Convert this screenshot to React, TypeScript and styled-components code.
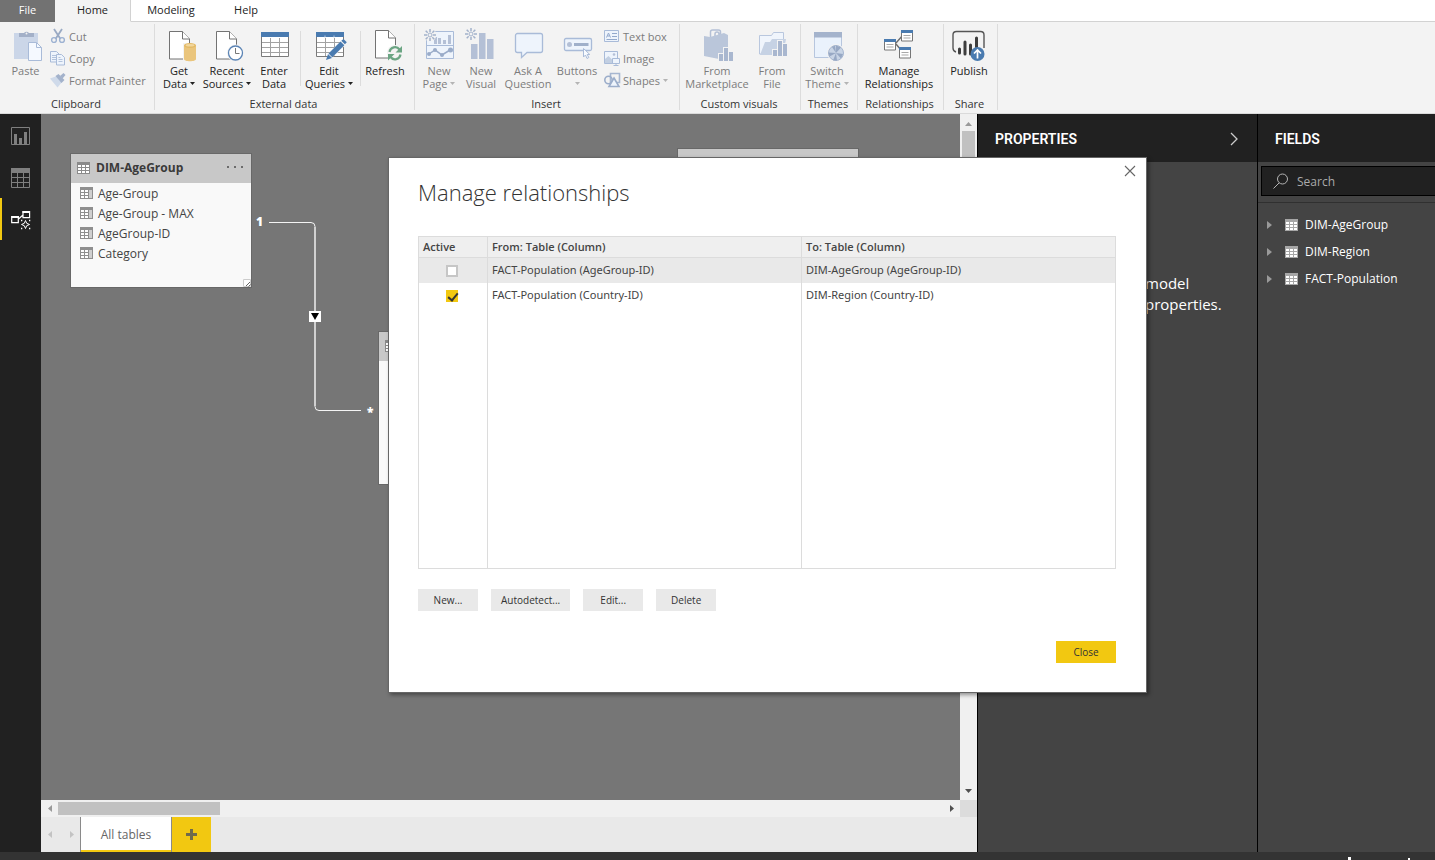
import React from "react";
import styled, { createGlobalStyle, css } from "styled-components";

const GlobalStyle = createGlobalStyle`
  * { box-sizing: border-box; }
  body {
    margin: 0;
    background: #333;
    font-family: "Open Sans", "Noto Sans", sans-serif;
    font-size: 11px;
    color: #333;
  }
  button, input { font: inherit; color: inherit; }
  button { border: 0; padding: 0; background: none; }
  svg { display: block; overflow: visible; flex: none; }
`;

/* ---------- Shell ---------- */

const Page = styled.div`
  display: flex;
  flex-direction: column;
  height: 100vh;
  min-height: 480px;
  overflow: hidden;
`;

const Workspace = styled.div`
  position: relative;
  display: flex;
  flex: 1;
  min-height: 0;
`;

const StatusBar = styled.footer`
  display: flex;
  justify-content: flex-end;
  align-items: flex-end;
  gap: 57px;
  height: 8px;
  padding-right: 25px;
  background: #333;
  overflow: hidden;
`;

const StatusMark = styled.span<{ $size: number }>`
  width: ${(p) => p.$size}px;
  height: ${(p) => p.$size}px;
  max-height: 3px;
  background: #fff;
`;

/* ---------- Ribbon ---------- */

const TabStrip = styled.nav`
  display: flex;
  height: 22px;
  background: #fff;
`;

const TabFill = styled.div`
  flex: 1;
  border-bottom: 1px solid #d2d2d2;
`;

const Tab = styled.button<{ $width: number; $kind?: "file" | "active" }>`
  width: ${(p) => p.$width}px;
  padding-bottom: 1px;
  line-height: 20px;
  color: #222;
  border-bottom: 1px solid #d2d2d2;
  ${(p) => p.$kind === "file" && css`background: #727272; color: #fff; border-color: #727272;`}
  ${(p) => p.$kind === "active" && css`background: #f3f3f3; border-bottom-color: #f3f3f3; border-right: 1px solid #d2d2d2;`}
`;

const RibbonBar = styled.header`
  display: flex;
  height: 92px;
  background: #f3f3f3;
  border-bottom: 1px solid #dadada;
  overflow: hidden;
`;

const Group = styled.section<{ $width: number }>`
  display: flex;
  flex-direction: column;
  flex: none;
  width: ${(p) => p.$width}px;
`;

const GroupBody = styled.div<{ $inset?: number }>`
  display: flex;
  height: 73px;
  padding-left: ${(p) => p.$inset ?? 0}px;
`;

const GroupLabel = styled.div`
  padding-right: 2px;
  line-height: 18px;
  text-align: center;
  color: #333;
`;

const GroupRule = styled.div`
  width: 1px;
  margin: 2px 0 3px;
  background: #dcdcdc;
`;

const InnerRule = styled.div<{ $before: number }>`
  width: 1px;
  margin: 9px 0 9px ${(p) => p.$before}px;
  background: #dcdcdc;
`;

const BigButton = styled.button<{ $width: number }>`
  display: flex;
  flex-direction: column;
  align-items: center;
  width: ${(p) => p.$width}px;
  padding-top: 8px;
  line-height: 13px;
  white-space: nowrap;
  color: #222;
  &:disabled { color: #7c7c7c; }
  > svg { margin-bottom: 2px; }
  &:disabled span > svg { color: #b4b4b4; }
`;

const Line = styled.span`
  display: flex;
  align-items: center;
  gap: 3px;
  height: 13px;
`;

const SmallList = styled.div<{ $before?: number }>`
  display: flex;
  flex-direction: column;
  padding-top: 3px;
  margin-left: ${(p) => p.$before ?? 0}px;
`;

const SmallButton = styled.button`
  display: flex;
  align-items: center;
  gap: 3px;
  height: 22px;
  white-space: nowrap;
  color: #7c7c7c;
  > svg:last-child { color: #b4b4b4; }
`;

const Caret = () => (
  <svg width="5" height="3" viewBox="0 0 5 3"><path d="M0 0h5L2.500 3z" fill="currentColor" /></svg>
);

const STEEL = "#b4c0d6";
const MIST = "#a9bbd8";
const PALE = "#eef4fc";
const BLUE = "#4a7bb0";

const Big = ({ children }: { children: React.ReactNode }) => (
  <svg width="32" height="32" viewBox="0 0 32 32" fill="none" aria-hidden="true">{children}</svg>
);
const Small = ({ children }: { children: React.ReactNode }) => (
  <svg width="16" height="16" viewBox="0 0 16 16" fill="none" aria-hidden="true">{children}</svg>
);

const Doc = ({ x = 6.5 }: { x?: number }) => (
  <g stroke="#737373" fill="#fff">
    <path d={`M${x} 1.500h13l7 7.500v20h-20z`} />
    <path d={`M${x + 13} 1.500v7.500h7`} />
  </g>
);

const PasteIcon = () => (
  <Big>
    <path d="M4 3h24v26H4z" fill="#cbd6e8" />
    <path d="M9 7V3h5a3 3 0 0 1 5 0h5v4z" fill="#a3b0c8" />
    <circle cx="16.500" cy="3.500" r="1" fill="#f3f3f3" />
    <path d="M18.500 12.500h8l5 5v13h-13z" fill="#f5f9ff" stroke={MIST} />
    <path d="M26.500 12.500v5h5" stroke={MIST} />
  </Big>
);
const GetDataIcon = () => (
  <Big>
    <Doc />
    <path d="M20 13h14v19H20z" fill="#f3f3f3" />
    <path d="M21 15.500v13.500c0 3 12 3 12 0V15.500z" fill="#eac57c" />
    <ellipse cx="27" cy="15.500" rx="6" ry="2.500" fill="#e3b964" />
    <ellipse cx="27" cy="15.300" rx="4.500" ry="1.300" fill="#f2d79e" />
  </Big>
);
const RecentIcon = () => (
  <Big>
    <Doc x={5.500} />
    <circle cx="24.500" cy="23" r="8.500" fill="#f3f3f3" />
    <circle cx="24.500" cy="23" r="7" fill="#fff" stroke="#5b84b5" strokeWidth="1.300" />
    <path d="M24.500 18v5.500h4" stroke="#777" />
  </Big>
);
const GridBase = () => (
  <>
    <path d="M3.500 2.500h27v24h-27z" fill="#fff" stroke="#7a7a7a" />
    <path d="M12.500 8v18M21.500 8v18M4 12.500h26M4 17.500h26M4 22.500h26" stroke="#a2a2a2" />
    <path d="M3 2h28v5H3z" fill={BLUE} />
  </>
);
const EnterIcon = () => <Big><GridBase /></Big>;
const EditIcon = () => (
  <Big>
    <GridBase />
    <path d="M12 5.500v2M21 5.500v2" stroke="#b9cbe0" />
    <path d="M14 29l3-7L29.500 10l4 4L21 26z" fill="#f3f3f3" />
    <path d="M13 30l2-6 4 4zM15.500 23.500l12-12 3.800 3.800-12 12zM28.300 10.700l2.200-1.700 3.300 3.300-1.900 2z" fill={BLUE} />
  </Big>
);
const RefreshIcon = () => (
  <Big>
    <g transform="translate(0 -1)"><Doc /></g>
    <circle cx="26" cy="23" r="8" fill="#f3f3f3" />
    <g stroke="#6ba583" strokeWidth="2.200">
      <path d="M20.500 22a5.600 5.600 0 0 1 10-2.500M31.500 24.500a5.600 5.600 0 0 1-10 2.500" />
    </g>
    <path d="M33 16v6.500h-6.500zM19 30.500V24h6.500z" fill="#6ba583" />
  </Big>
);
const Burst = ({ x, y }: { x: number; y: number }) => (
  <g transform={`translate(${x} ${y})`} stroke="#a3b2cb" strokeWidth="1.500">
    <circle r="6.500" fill="#f3f3f3" stroke="none" />
    <path d="M0-6v3M0 3v3M-6 0h3M3 0h3M-4.300-4.300l2 2M2.300 2.300l2 2M-4.300 4.300l2-2M2.300-2.300l2-2" />
    <circle r="2" strokeWidth="1" />
  </g>
);
const NewPageIcon = () => (
  <Big>
    <path d="M3.500 1.500h27v27h-27zM3.500 15.500h27" stroke={MIST} fill={PALE} />
    <path d="M11 7h3v7h-3zM15 8h3v6h-3zM20 10h3v4h-3zM25 5h3v9h-3z" fill={STEEL} />
    <path d="M6 24l6-4 7 5 8-5" stroke="#9aacc9" strokeWidth="1.500" />
    <g fill="#9aacc9"><circle cx="6" cy="24" r="2" /><circle cx="12" cy="20" r="2" /><circle cx="19" cy="25" r="2" /><circle cx="27.500" cy="20" r="2.500" /></g>
    <Burst x={7} y={5} />
  </Big>
);
const NewVisualIcon = () => (
  <Big>
    <path d="M6 14h6.500v15H6zM14 3h6.500v26H14zM22 9h6.500v20H22z" fill={STEEL} />
    <Burst x={6} y={4} />
  </Big>
);
const AskIcon = () => (
  <Big>
    <path d="M5.500 3.500h23a2 2 0 0 1 2 2v15a2 2 0 0 1-2 2H15l-5.500 5v-5h-4a2 2 0 0 1-2-2v-15a2 2 0 0 1 2-2z" fill={PALE} stroke={MIST} strokeWidth="1.300" />
  </Big>
);
const ButtonsIcon = () => (
  <Big>
    <rect x="3.500" y="8.500" width="27" height="12" rx="1.500" fill={PALE} stroke={MIST} strokeWidth="1.300" />
    <circle cx="8.500" cy="14.500" r="2.500" fill={STEEL} />
    <path d="M13 13h14.500v3H13z" fill="#a0b0ca" />
    <path d="M22.500 18.500v8.500l2-2 1.500 3.500 1.800-1-1.600-3h2.600z" fill="#f8fbff" stroke={MIST} />
  </Big>
);
const MarketIcon = () => (
  <Big>
    <path d="M9.500 8V2q0-2 2-2h6q2 0 2 2v4M14 7V4q0-2 2-2t2 2v3" stroke={STEEL} strokeWidth="1.500" />
    <path d="M3 6l6 1 14-4 4 2v23l-4 2-20-4z" fill="#bac6da" />
    <path d="M17 24v-1h5v-6h6v4h5v11H17z" fill="#f3f3f3" />
    <path d="M18 24h4v7h-4zM23 18h4v13h-4zM28 22h4v9h-4z" fill="#a9b7cf" />
  </Big>
);
const FileIcon = () => (
  <Big>
    <path d="M3.500 24V5.500h12l2-3h10V24z" stroke="#b9c7de" fill="#f0f5fc" />
    <path d="M4 25l5-13h5l2-3h14l-3 16z" fill="#c6d2e4" />
    <path d="M16 19h5v-9h6v3h5v13H16z" fill="#f3f3f3" />
    <path d="M17 20h4v6h-4zM22 11h4v15h-4zM27 14h4v12h-4z" fill="#a9b7cf" />
  </Big>
);
const ThemeIcon = () => (
  <Big>
    <path d="M3.500 2.500h27v25h-27z" fill="#eaf2fc" stroke="#b7c6de" />
    <path d="M3 2h28v5.500H3z" fill="#a4b3cc" />
    <circle cx="25" cy="23" r="9" fill="#f3f3f3" />
    <circle cx="25" cy="23" r="7.500" fill="#c8d4e5" stroke="#a6b6d0" />
    <path d="M25 23v-7.500l5 2zM25 23l7 1-2 4.500zM25 23l1 7.500h-4zM25 23l-6.500 3.500-1-4zM25 23l-4-6 3-1.500z" fill="#97a8c4" />
  </Big>
);
const RelBox = ({ x, y }: { x: number; y: number }) => (
  <g transform={`translate(${x} ${y})`}>
    <path d="M.500.500h11v10.500H.500z" fill="#fff" stroke="#767676" />
    <path d="M0 0h12v3H0z" fill={BLUE} />
    <path d="M2.500 5.500h7M2.500 8h7" stroke="#a9a9a9" />
  </g>
);
const ManageIcon = () => (
  <Big>
    <path d="M13 13l7-8M13 14l5 6" stroke="#6d6d6d" strokeWidth="1.400" />
    <RelBox x={1} y={9} /><RelBox x={18} y={0} /><RelBox x={16} y={17} />
  </Big>
);
const PublishIcon = () => (
  <Big>
    <path d="M3 22q-3-1-3-4V5q0-3.500 3.500-3.500h24Q31 1.500 31 5v13" stroke="#555" strokeWidth="1.400" />
    <path d="M6.500 19v4M12 12v12M17.500 15v9M23.500 8v9" stroke="#3d3d3d" strokeWidth="3" strokeLinecap="round" />
    <circle cx="24.500" cy="24" r="7" fill={BLUE} />
    <path d="M24.500 28.500v-8M21 23.500l3.500-3.500 3.500 3.500" stroke="#fff" strokeWidth="1.700" />
  </Big>
);

const CutIcon = () => (
  <Small>
    <path d="M4 1l6.500 10M12 1L5.500 11" stroke="#9aaac4" strokeWidth="1.800" />
    <circle cx="4" cy="12" r="2.400" stroke="#9db2d2" strokeWidth="1.400" />
    <circle cx="12" cy="12" r="2.400" stroke="#9db2d2" strokeWidth="1.400" />
  </Small>
);
const CopyIcon = () => (
  <Small>
    <path d="M.500 1.500h6l2.500 2.500v8H.500z" fill={PALE} stroke={MIST} />
    <path d="M2 5.500h4M2 7.500h4M2 9.500h4" stroke="#b3c3dc" />
    <path d="M6.500 4.500h5l3 3v7.500h-8z" fill={PALE} stroke={MIST} />
    <path d="M8.500 9.500h4M8.500 11.500h4M8.500 7.500h2" stroke="#b3c3dc" />
  </Small>
);
const PainterIcon = () => (
  <Small>
    <path d="M0 6.500l7-2.500 5 6-4.500 5.500z" fill="#cfdaea" />
    <path d="M5.500 4l3-2 6 6-3 3z" fill="#a3b2cb" />
    <path d="M10 4l3.500-3 2 2-3 3.500z" fill="#a3b2cb" />
  </Small>
);
const TextBoxIcon = () => (
  <Small>
    <path d="M.500 2.500h14v11H.500z" fill={PALE} stroke={MIST} />
    <path d="M2.500 9.500L4.500 5l2 4.500M3.500 8h2M8 5.500h5M8 8.500h5M2.500 11.500H13" stroke="#93a9cc" />
  </Small>
);
const ImageIcon = () => (
  <Small>
    <path d="M.500 1.500h13v12H.500z" fill={PALE} stroke={MIST} />
    <path d="M1 13V9l3.500-3 4 4v3z" fill="#c2cfe2" /><circle cx="10" cy="4.500" r="1.300" fill={STEEL} />
    <path d="M8.500 8.500h7v5h-7zM12 14v1.500M9.500 15.500h5" fill={PALE} stroke={MIST} />
  </Small>
);
const ShapesIcon = () => (
  <Small>
    <path d="M6.500 1.500h9v9h-9z" stroke="#a6b6d0" strokeWidth="1.600" />
    <circle cx="4.500" cy="8" r="3.700" stroke="#9badca" strokeWidth="1.600" />
    <path d="M10 6l5 8.500H5z" fill={PALE} stroke="#9badca" strokeWidth="1.600" />
  </Small>
);

/* ---------- View rail ---------- */

const Rail = styled.nav`
  display: flex;
  flex-direction: column;
  flex: none;
  width: 41px;
  background: #212121;
`;

const RailButton = styled.button<{ $on?: boolean }>`
  display: flex;
  align-items: center;
  justify-content: center;
  height: 42px;
  border-left: 2px solid ${(p) => (p.$on ? "#f2c811" : "transparent")};
  padding: 2px 2px 0 0;
  color: ${(p) => (p.$on ? "#fff" : "#7f7f7f")};
`;

const ReportIcon = () => (
  <svg width="20" height="20" viewBox="0 0 20 20" fill="none">
    <path d="M.500 1.500h18v17H.500z" stroke="currentColor" />
    <path d="M3 8h3v10H3zM8 12h3v6H8zM13 6h3v12h-3z" fill="currentColor" />
  </svg>
);
const DataIcon = () => (
  <svg width="20" height="20" viewBox="0 0 20 20" fill="none">
    <path d="M.500.500h18v19H.500zM1 9.500h18M1 14.500h18M6.500 5v14M12.500 5v14" stroke="currentColor" />
    <path d="M0 0h19v5H0z" fill="currentColor" />
  </svg>
);
const ModelIcon = () => (
  <svg width="20" height="20" viewBox="0 0 20 20" fill="none" stroke="currentColor">
    <path d="M.700 6.700h6.600v6H.700zM12 1.700h6.600v6H12zM7.500 9l4.500-4" strokeWidth="1.200" />
    <path d="M.500 7H8M11.500 2H19" strokeWidth="2" />
    <path d="M14.500 10.500l1.200 2.800 2.800 1.200-2.800 1.200-1.200 2.800-1.200-2.800-2.800-1.200 2.800-1.200z" />
    <path d="M10 10.500h1.300M18 10.500h1.300M10 18.500h1.300M18 18.500h1.300" strokeWidth="1.300" />
  </svg>
);

/* ---------- Diagram canvas ---------- */

const Stage = styled.main`
  display: flex;
  flex-direction: column;
  flex: 1;
  min-width: 0;
`;

const StageRow = styled.div`
  display: flex;
  flex: 1;
  min-height: 0;
`;

const Canvas = styled.div`
  position: relative;
  flex: 1;
  min-width: 0;
  overflow: hidden;
  background: #767676;
`;

const Node = styled.article<{ $x: number; $y: number; $h: number }>`
  position: absolute;
  left: ${(p) => p.$x}px;
  top: ${(p) => p.$y}px;
  width: 180px;
  height: ${(p) => p.$h}px;
  background: #f9f9f9;
  box-shadow: 0 0 0 1px #686868;
`;

const NodeHead = styled.h3`
  display: flex;
  align-items: center;
  gap: 6px;
  height: 29px;
  margin: 0;
  padding: 0 8px 2px 6px;
  background: #c8c8c8;
  font-size: 12px;
  font-weight: 700;
  color: #3a3a3a;
`;

const NodeMenu = styled.button`
  margin-left: auto;
  color: #6b6b6b;
`;

const NodeFields = styled.ul`
  margin: 0;
  padding: 0 9px;
  list-style: none;
  font-size: 12px;
  color: #444;
`;

const NodeField = styled.li`
  display: flex;
  align-items: center;
  gap: 5px;
  height: 20px;
`;

const Grip = styled.svg`
  position: absolute;
  right: 0;
  bottom: 0;
`;

const Links = styled.svg`
  position: absolute;
  left: 215px;
  top: 100px;
`;

const EndMark = styled.span<{ $x: number; $y: number }>`
  position: absolute;
  left: ${(p) => p.$x}px;
  top: ${(p) => p.$y}px;
  font-size: 12px;
  line-height: 16px;
  font-weight: 800;
  color: #fff;
`;

const TableGlyph = ({ color = "#8a8a8a" }: { color?: string }) => (
  <svg width="13" height="12" viewBox="0 0 13 12">
    <path d="M0 0h13v12H0z" fill={color} />
    <path d="M1 3h3v2H1zM5 3h3v2H5zM9 3h3v2H9zM1 6h3v2H1zM5 6h3v2H5zM9 6h3v2H9zM1 9h3v2H1zM5 9h3v2H5zM9 9h3v2H9z" fill="#fff" />
  </svg>
);
const ColumnGlyph = () => (
  <svg width="13" height="12" viewBox="0 0 13 12">
    <path d="M0 0h13v12H0z" fill="#8f8f8f" />
    <path d="M1 3h3v2H1zM5 3h3v2H5zM1 6h3v2H1zM5 6h3v2H5zM1 9h3v2H1zM5 9h3v2H5z" fill="#fff" />
    <path d="M9 3h3v8H9z" fill="#cfcfcf" />
  </svg>
);

/* ---------- Scroll bars and page tabs ---------- */

const VTrack = styled.div`
  display: flex;
  flex-direction: column;
  align-items: center;
  justify-content: space-between;
  width: 17px;
  padding: 7px 0;
  background: #f0f0f0;
`;

const VThumb = styled.div`
  width: 13px;
  height: 300px;
  margin: 5px 0 auto;
  background: #c1c1c1;
`;

const HTrack = styled.div`
  display: flex;
  align-items: center;
  flex: 1;
  height: 17px;
  padding: 0 6px;
  background: #f0f0f0;
`;

const HThumb = styled.div`
  width: 162px;
  height: 13px;
  margin: 0 auto 0 6px;
  background: #c1c1c1;
`;

const HRow = styled.div`
  display: flex;
  background: #dcdcdc;
  padding-right: 17px;
`;

const Arrow = ({ dir, color }: { dir: "up" | "down" | "left" | "right"; color: string }) => {
  const shape = {
    up: "M0 5h7L3.500 1z",
    down: "M0 1h7L3.500 5z",
    left: "M5 0v7L1 3.500z",
    right: "M1 0v7l4-3.500z",
  }[dir];
  const tall = dir === "left" || dir === "right";
  return (
    <svg width={tall ? 5 : 7} height={tall ? 7 : 5} aria-hidden="true"><path d={shape} fill={color} /></svg>
  );
};

const Sheets = styled.div`
  display: flex;
  height: 35px;
  background: #e9e9e9;
`;

const SheetNav = styled.div`
  display: flex;
  align-items: center;
  justify-content: space-between;
  width: 39px;
  padding: 0 6px;
`;

const Sheet = styled.button`
  width: 92px;
  background: #fff;
  border: solid #8a8a8a;
  border-width: 0 1px;
  box-shadow: inset 0 -2px 0 #f2c811;
  font-size: 12px;
  color: #666;
`;

const AddSheet = styled.button`
  display: flex;
  align-items: center;
  justify-content: center;
  width: 39px;
  background: #f2c811;
`;

/* ---------- Side panes ---------- */

const Pane = styled.aside<{ $width: number }>`
  flex: none;
  width: ${(p) => p.$width}px;
  border-left: 1px solid #000;
  background: #444;
  color: #fff;
  overflow: hidden;
`;

const PaneHead = styled.div`
  display: flex;
  align-items: center;
  justify-content: space-between;
  height: 48px;
  padding: 2px 19px 0 17px;
  background: #212121;
`;

const PaneTitle = styled.h2`
  margin: 0;
  font-family: Roboto, sans-serif;
  font-size: 14px;
  font-weight: 600;
`;

const PaneHint = styled.p`
  margin: 111px 0 0 167px;
  font-size: 15px;
  line-height: 21px;
`;

const SearchArea = styled.div`
  padding: 4px 0 6px 3px;
  border-bottom: 1px solid #303030;
`;

const SearchBox = styled.label`
  display: flex;
  align-items: center;
  gap: 8px;
  height: 30px;
  padding-left: 11px;
  background: #212121;
  border: 1px solid #000;
  border-right: 0;
`;

const SearchInput = styled.input`
  min-width: 0;
  flex: 1;
  padding: 0;
  border: 0;
  outline: 0;
  background: transparent;
  font-size: 12px;
  &::placeholder { color: #aaa; opacity: 1; }
`;

const FieldTree = styled.ul`
  margin: 0;
  padding: 8px 0 0 9px;
  list-style: none;
  font-size: 12px;
`;

const FieldItem = styled.li`
  display: flex;
  align-items: center;
  gap: 7px;
  height: 27px;
  > svg:first-child { margin-right: 6px; }
`;

/* ---------- Dialog ---------- */

const Dialog = styled.section`
  position: absolute;
  left: 388px;
  right: 288px;
  top: 43px;
  display: flex;
  flex-direction: column;
  padding: 19px 30px 29px 29px;
  background: #fff;
  border: 1px solid #666;
  box-shadow: 2px 2px 4px rgba(0, 0, 0, 0.4);
`;

const DialogClose = styled.button`
  position: absolute;
  top: 7px;
  right: 10px;
`;

const DialogTitle = styled.h1`
  margin: 0 0 29px;
  font-size: 22px;
  line-height: 30px;
  font-weight: 300;
  color: #333;
`;

const RelTable = styled.table`
  width: 100%;
  height: 333px;
  table-layout: fixed;
  border-collapse: collapse;
  color: #444;
  th, td {
    padding: 0 4px 2px;
    border: solid #dcdcdc;
    border-width: 0 1px;
    text-align: left;
  }
  td { font-family: "Noto Sans", "Open Sans", sans-serif; }
  th {
    height: 21px;
    border-width: 1px;
    background: #efefef;
    font-weight: 600;
  }
  tr:last-child td { border-bottom-width: 1px; }
`;

const RelRow = styled.tr<{ $shaded?: boolean }>`
  height: 25px;
  background: ${(p) => (p.$shaded ? "#e9e9e9" : "transparent")};
`;

const ActiveCell = styled.td`
  && { padding: 2px 2px 0 0; }
`;

const ActiveBox = styled.input`
  appearance: none;
  display: block;
  width: 12px;
  height: 12px;
  margin: 0 auto;
  background: #fff;
  border: 2px solid #c6c6c6;
  &:checked { background: #f2c811; border-color: #f2c811; }
  &:checked::after {
    content: "";
    display: block;
    width: 4px;
    height: 8px;
    margin: -1px 0 0 2px;
    border: solid #333;
    border-width: 0 2px 2px 0;
    transform: rotate(40deg);
  }
`;

const Actions = styled.div`
  display: flex;
  gap: 13px;
  margin: 20px 0 30px;
`;

const ActionButton = styled.button<{ $primary?: boolean }>`
  min-width: 60px;
  height: 22px;
  padding: 0 10px;
  background: ${(p) => (p.$primary ? "#f2c811" : "#e9e9e9")};
  font-size: 10px;
  color: #333;
  align-self: ${(p) => (p.$primary ? "flex-end" : "auto")};
`;

/* ---------- Data ---------- */

const ageFields = ["Age-Group", "Age-Group - MAX", "AgeGroup-ID", "Category"];
const tables = ["DIM-AgeGroup", "DIM-Region", "FACT-Population"];
const relations = [
  { from: "FACT-Population (AgeGroup-ID)", to: "DIM-AgeGroup (AgeGroup-ID)", active: false },
  { from: "FACT-Population (Country-ID)", to: "DIM-Region (Country-ID)", active: true },
];

type BigProps = { icon: React.ReactNode; width: number; top: string; bottom?: string; caret?: boolean; off?: boolean };
const BigCommand = ({ icon, width, top, bottom, caret, off }: BigProps) => (
  <BigButton $width={width} disabled={off}>
    {icon}
    <Line>{top}</Line>
    <Line>{bottom}{caret && <Caret />}</Line>
  </BigButton>
);

const Ribbon = () => (
  <RibbonBar>
    <Group $width={154}>
      <GroupBody $inset={1}>
        <BigCommand icon={<PasteIcon />} width={49} top="Paste" off />
        <SmallList>
          <SmallButton disabled><CutIcon />Cut</SmallButton>
          <SmallButton disabled><CopyIcon />Copy</SmallButton>
          <SmallButton disabled><PainterIcon />Format Painter</SmallButton>
        </SmallList>
      </GroupBody>
      <GroupLabel>Clipboard</GroupLabel>
    </Group>
    <GroupRule />
    <Group $width={259}>
      <GroupBody>
        <BigCommand icon={<GetDataIcon />} width={48} top="Get" bottom="Data" caret />
        <BigCommand icon={<RecentIcon />} width={48} top="Recent" bottom="Sources" caret />
        <BigCommand icon={<EnterIcon />} width={46} top="Enter" bottom="Data" />
        <InnerRule $before={3} />
        <BigCommand icon={<EditIcon />} width={56} top="Edit" bottom="Queries" caret />
        <InnerRule $before={3} />
        <BigCommand icon={<RefreshIcon />} width={48} top="Refresh" />
      </GroupBody>
      <GroupLabel>External data</GroupLabel>
    </Group>
    <GroupRule />
    <Group $width={264}>
      <GroupBody $inset={3}>
        <BigCommand icon={<NewPageIcon />} width={42} top="New" bottom="Page" caret off />
        <BigCommand icon={<NewVisualIcon />} width={42} top="New" bottom="Visual" off />
        <BigCommand icon={<AskIcon />} width={52} top="Ask A" bottom="Question" off />
        <BigCommand icon={<ButtonsIcon />} width={46} top="Buttons" caret off />
        <SmallList $before={4}>
          <SmallButton disabled><TextBoxIcon />Text box</SmallButton>
          <SmallButton disabled><ImageIcon />Image</SmallButton>
          <SmallButton disabled><ShapesIcon />Shapes <Caret /></SmallButton>
        </SmallList>
      </GroupBody>
      <GroupLabel>Insert</GroupLabel>
    </Group>
    <GroupRule />
    <Group $width={120}>
      <GroupBody $inset={3}>
        <BigCommand icon={<MarketIcon />} width={68} top="From" bottom="Marketplace" off />
        <BigCommand icon={<FileIcon />} width={42} top="From" bottom="File" off />
      </GroupBody>
      <GroupLabel>Custom visuals</GroupLabel>
    </Group>
    <GroupRule />
    <Group $width={56}>
      <GroupBody>
        <BigCommand icon={<ThemeIcon />} width={52} top="Switch" bottom="Theme" caret off />
      </GroupBody>
      <GroupLabel>Themes</GroupLabel>
    </Group>
    <GroupRule />
    <Group $width={85}>
      <GroupBody>
        <BigCommand icon={<ManageIcon />} width={82} top="Manage" bottom="Relationships" />
      </GroupBody>
      <GroupLabel>Relationships</GroupLabel>
    </Group>
    <GroupRule />
    <Group $width={53}>
      <GroupBody>
        <BigCommand icon={<PublishIcon />} width={50} top="Publish" />
      </GroupBody>
      <GroupLabel>Share</GroupLabel>
    </Group>
    <GroupRule />
  </RibbonBar>
);

const Diagram = () => (
  <Canvas>
    <Node $x={30} $y={40} $h={133}>
      <NodeHead><TableGlyph />DIM-AgeGroup
        <NodeMenu aria-label="More options">
          <svg width="16" height="3" viewBox="0 0 16 3" fill="currentColor"><path d="M0 0h2v2H0zM7 0h2v2H7zM14 0h2v2h-2z" /></svg>
        </NodeMenu>
      </NodeHead>
      <NodeFields>
        {ageFields.map((f) => <NodeField key={f}><ColumnGlyph />{f}</NodeField>)}
      </NodeFields>
      <Grip width="8" height="8" viewBox="0 0 8 8"><path d="M.500.500h7v7h-7z" fill="#fff" stroke="#ccc" /><path d="M3 7l4-4M5.500 7.500l2-2" stroke="#666" /></Grip>
    </Node>
    <Node $x={338} $y={218} $h={152}><NodeHead><TableGlyph /></NodeHead></Node>
    <Node $x={637} $y={35} $h={150}><NodeHead><TableGlyph /></NodeHead></Node>
    <Links width="120" height="210" viewBox="0 0 120 210" fill="none">
      <path d="M13 8.500h42q4 0 4 4v180q0 4 4 4h42" stroke="#f4f4f4" strokeWidth="1" />
      <path d="M59 13v179" stroke="#d0d0d0" strokeWidth="2" />
      <path d="M53 97h12v11H53z" fill="#fff" />
      <path d="M55 99h8l-4 7z" fill="#000" />
    </Links>
    <EndMark $x={215} $y={100}>1</EndMark>
    <EndMark $x={326} $y={290}>*</EndMark>
  </Canvas>
);

export default function App() {
  return (
    <Page>
      <GlobalStyle />
      <TabStrip>
        <Tab $width={55} $kind="file">File</Tab>
        <Tab $width={76} $kind="active">Home</Tab>
        <Tab $width={80}>Modeling</Tab>
        <Tab $width={70}>Help</Tab>
        <TabFill />
      </TabStrip>
      <Ribbon />
      <Workspace>
        <Rail>
          <RailButton aria-label="Report"><ReportIcon /></RailButton>
          <RailButton aria-label="Data"><DataIcon /></RailButton>
          <RailButton aria-label="Model" $on><ModelIcon /></RailButton>
        </Rail>
        <Stage>
          <StageRow>
            <Diagram />
            <VTrack>
              <Arrow dir="up" color="#999" />
              <VThumb />
              <Arrow dir="down" color="#505050" />
            </VTrack>
          </StageRow>
          <HRow>
            <HTrack>
              <Arrow dir="left" color="#999" />
              <HThumb />
              <Arrow dir="right" color="#505050" />
            </HTrack>
          </HRow>
          <Sheets>
            <SheetNav><Arrow dir="left" color="#c3c3c3" /><Arrow dir="right" color="#c3c3c3" /></SheetNav>
            <Sheet>All tables</Sheet>
            <AddSheet aria-label="Add page">
              <svg width="11" height="11" viewBox="0 0 11 11"><path d="M5.500 0v11M0 5.500h11" stroke="#6f6a4c" strokeWidth="3" /></svg>
            </AddSheet>
          </Sheets>
        </Stage>
        <Pane $width={280}>
          <PaneHead>
            <PaneTitle>PROPERTIES</PaneTitle>
            <button aria-label="Collapse">
              <svg width="8" height="12" viewBox="0 0 8 12" fill="none"><path d="M1 0l6 6-6 6" stroke="#ccc" strokeWidth="1.300" /></svg>
            </button>
          </PaneHead>
          <PaneHint>model<br />properties.</PaneHint>
        </Pane>
        <Pane $width={178}>
          <PaneHead><PaneTitle>FIELDS</PaneTitle></PaneHead>
          <SearchArea>
            <SearchBox>
              <svg width="16" height="16" viewBox="0 0 16 16" fill="none" stroke="#b5b5b5"><circle cx="9.500" cy="6" r="5" /><path d="M6 10l-5.500 5.500" /></svg>
              <SearchInput placeholder="Search" aria-label="Search" />
            </SearchBox>
          </SearchArea>
          <FieldTree>
            {tables.map((t) => (
              <FieldItem key={t}>
                <svg width="5" height="8" viewBox="0 0 5 8"><path d="M0 0v8l5-4z" fill="#9a9a9a" /></svg>
                <TableGlyph color="#a6a6a6" />{t}
              </FieldItem>
            ))}
          </FieldTree>
        </Pane>
        <Dialog role="dialog" aria-labelledby="dialog-title">
          <DialogClose aria-label="Close dialog">
            <svg width="12" height="12" viewBox="0 0 12 12"><path d="M1 1l10 10M11 1L1 11" stroke="#666" strokeWidth="1.100" /></svg>
          </DialogClose>
          <DialogTitle id="dialog-title">Manage relationships</DialogTitle>
          <RelTable>
            <colgroup><col width="69" /><col /><col /></colgroup>
            <thead>
              <tr><th>Active</th><th>From: Table (Column)</th><th>To: Table (Column)</th></tr>
            </thead>
            <tbody>
              {relations.map((r) => (
                <RelRow key={r.from} $shaded={!r.active}>
                  <ActiveCell><ActiveBox type="checkbox" defaultChecked={r.active} aria-label={`Active: ${r.from}`} /></ActiveCell>
                  <td>{r.from}</td>
                  <td>{r.to}</td>
                </RelRow>
              ))}
              <tr><td /><td /><td /></tr>
            </tbody>
          </RelTable>
          <Actions>
            <ActionButton>New...</ActionButton>
            <ActionButton>Autodetect...</ActionButton>
            <ActionButton>Edit...</ActionButton>
            <ActionButton>Delete</ActionButton>
          </Actions>
          <ActionButton $primary>Close</ActionButton>
        </Dialog>
      </Workspace>
      <StatusBar><StatusMark $size={3} /><StatusMark $size={2} /></StatusBar>
    </Page>
  );
}
